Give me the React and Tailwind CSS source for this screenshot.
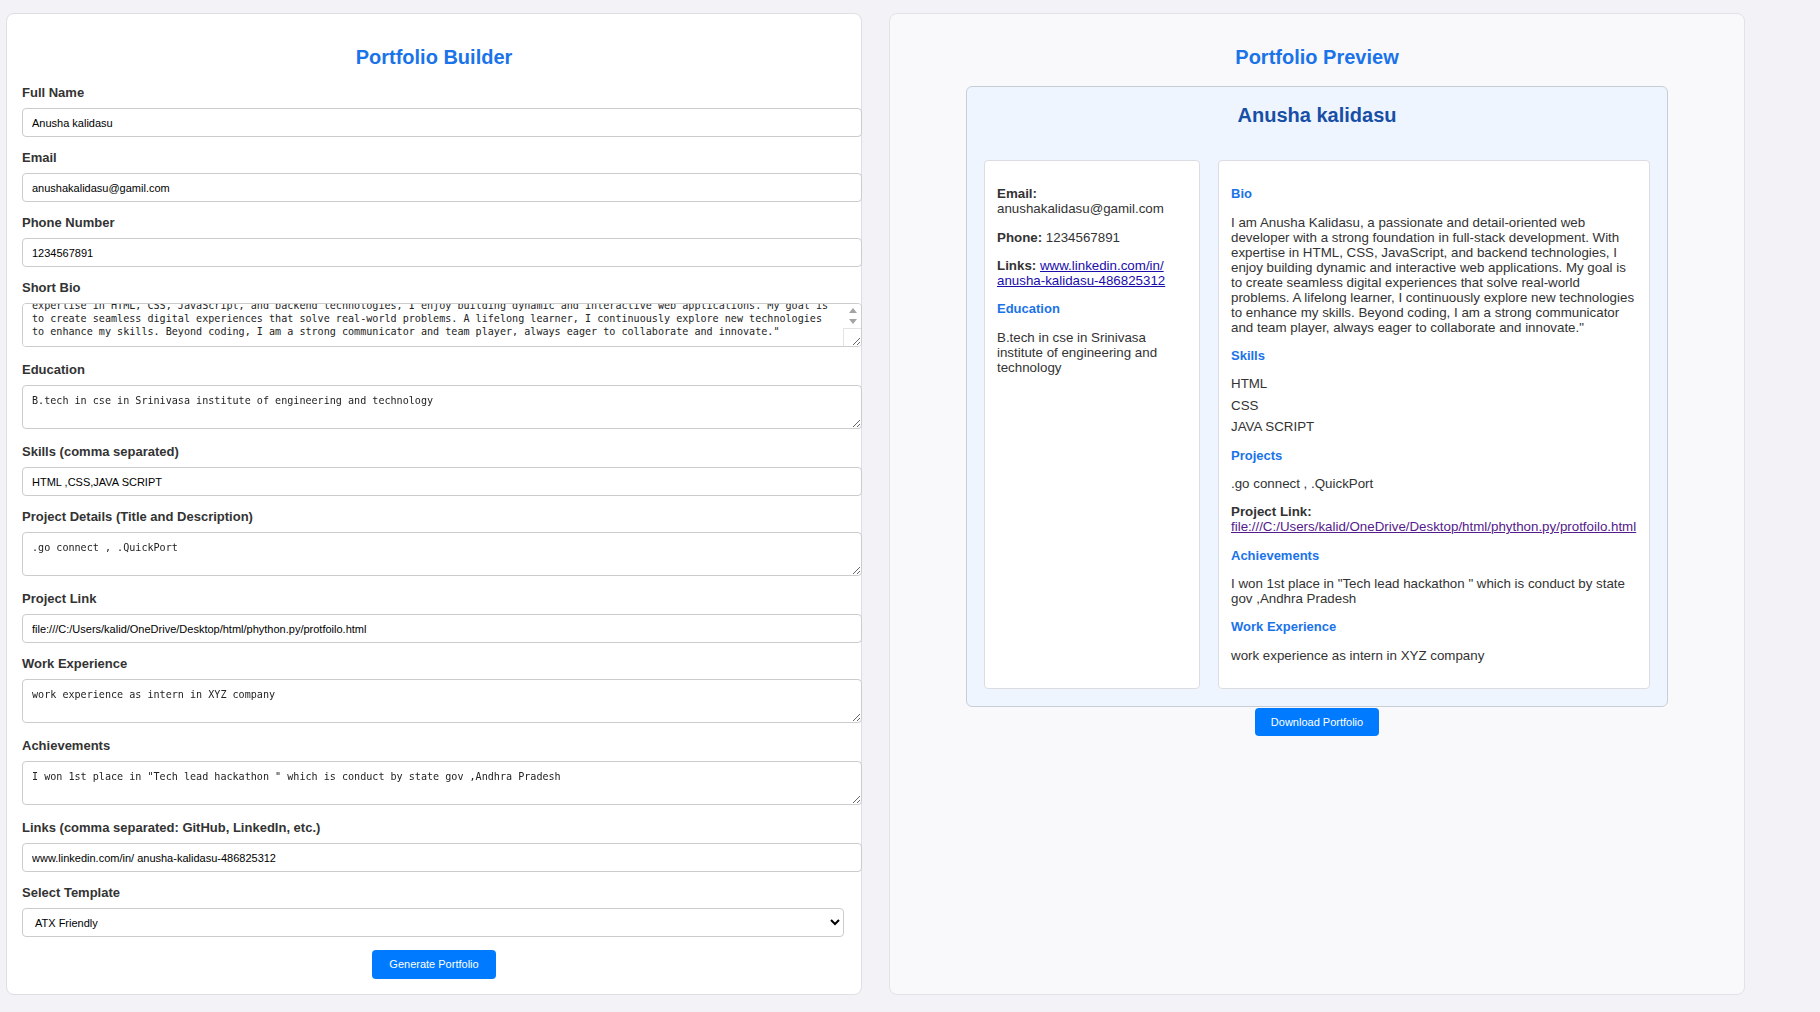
import { useEffect, useRef } from 'react';

const bioLines = [
  'I am Anusha Kalidasu, a passionate and detail-oriented web developer with a strong foundation in full-stack development. With',
  'expertise in HTML, CSS, JavaScript, and backend technologies, I enjoy building dynamic and interactive web applications. My goal is',
  'to create seamless digital experiences that solve real-world problems. A lifelong learner, I continuously explore new technologies',
  'to enhance my skills. Beyond coding, I am a strong communicator and team player, always eager to collaborate and innovate."',
];

const bioText = bioLines.join(' ');

const labelCls = 'block text-[13px] leading-[15px] font-bold text-[#333] mb-[8px]';
const inputCls =
  'block w-[calc(100%+16px)] h-[29px] px-[9px] border border-[#ccc] rounded-[4px] bg-white text-[11px] text-black outline-none mb-[13px]';
const areaCls =
  'block w-full h-[44px] px-[9px] py-[8px] border border-[#ccc] rounded-[4px] bg-white text-[10.1px] leading-[13px] text-[#222] outline-none [scrollbar-width:none] [font-family:"DejaVu_Sans_Mono",monospace]';

function Input({ label, value }) {
  return (
    <>
      <label className={labelCls}>{label}</label>
      <input className={inputCls} defaultValue={value} />
    </>
  );
}

function Area({ label, value, areaRef, scrollbar }) {
  return (
    <>
      <label className={labelCls}>{label}</label>
      <div className="relative w-[calc(100%+16px)] mb-[15px]">
        <textarea ref={areaRef} rows={2} spellCheck={false} className={areaCls} defaultValue={value} />
        {scrollbar && (
          <>
            {/* scrollbar arrows drawn over the box */}
            <div className="absolute right-[1px] top-[1px] w-[17px] h-[24px] flex flex-col items-center pt-[4px] gap-[6px] pointer-events-none">
              <span className="w-0 h-0 border-x-[4px] border-x-transparent border-b-[5px] border-b-[#a3a3a3]" />
              <span className="w-0 h-0 border-x-[4px] border-x-transparent border-t-[5px] border-t-[#a3a3a3]" />
            </div>
            <div className="absolute right-[1px] bottom-[1px] w-[18px] h-[18px] border-l border-t border-[#e3e3e3] pointer-events-none" />
          </>
        )}
      </div>
    </>
  );
}

function Heading({ children }) {
  return <h3 className="my-[13.33px] text-[13px] leading-[15px] font-bold text-[#1a73e8]">{children}</h3>;
}

function Para({ children }) {
  return <p className="my-[13.33px]">{children}</p>;
}

export default function App() {
  const bioRef = useRef(null);

  useEffect(() => {
    // keep the bio box scrolled to its last line
    if (bioRef.current) bioRef.current.scrollTop = bioRef.current.scrollHeight;
  }, []);

  return (
    <div className="min-h-screen bg-[#f3f3f7] pl-[6px] pt-[13px] pb-[17px] flex gap-[27px] items-stretch [font-family:'Liberation_Sans',Arial,sans-serif]">
      {/* builder form */}
      <div className="w-[856px] bg-white border border-[#dedee3] rounded-[8px] px-[15px] pt-[16px] pb-[15px]">
        <h2 className="mt-[16px] mb-[16px] text-center text-[20px] leading-[23px] font-bold text-[#1a73e8]">
          Portfolio Builder
        </h2>

        <Input label="Full Name" value="Anusha kalidasu" />
        <Input label="Email" value="anushakalidasu@gamil.com" />
        <Input label="Phone Number" value="1234567891" />
        <Area label="Short Bio" value={bioLines.join('\n')} areaRef={bioRef} scrollbar />
        <Area label="Education" value="B.tech in cse in Srinivasa institute of engineering and technology" />
        <Input label="Skills (comma separated)" value="HTML ,CSS,JAVA SCRIPT" />
        <Area label="Project Details (Title and Description)" value=".go connect , .QuickPort" />
        <Input label="Project Link" value="file:///C:/Users/kalid/OneDrive/Desktop/html/phython.py/protfoilo.html" />
        <Area label="Work Experience" value="work experience as intern in XYZ company" />
        <Area
          label="Achievements"
          value={'I won 1st place in "Tech lead hackathon " which is conduct by state gov ,Andhra Pradesh'}
        />
        <Input label="Links (comma separated: GitHub, LinkedIn, etc.)" value="www.linkedin.com/in/ anusha-kalidasu-486825312" />

        <label className={labelCls}>Select Template</label>
        <select
          defaultValue="atx"
          className="block w-[822px] h-[29px] pl-[8px] pr-[6px] border border-[#ccc] rounded-[4px] bg-white text-[11px] text-black outline-none mb-[13px]"
        >
          <option value="atx">ATX Friendly</option>
          <option value="modern">Modern</option>
          <option value="classic">Classic</option>
        </select>

        <button className="block mx-auto h-[29px] px-[17px] bg-[#007bff] text-white text-[11px] rounded-[4px]">
          Generate Portfolio
        </button>
      </div>

      {/* preview */}
      <div className="w-[856px] bg-[#f9f9fb] border border-[#e2e2e7] rounded-[8px] px-[16px] pt-[16px] pb-[15px]">
        <h2 className="mt-[16px] mb-[17px] text-center text-[20px] leading-[23px] font-bold text-[#1a73e8]">
          Portfolio Preview
        </h2>

        <div className="w-[702px] mx-auto bg-[#eef5fe] border border-[#c9ced6] rounded-[6px] p-[17px] text-[13.33px] leading-[15px] text-[#333]">
          <h2 className="mb-[33px] text-center text-[20px] leading-[23px] font-bold text-[#174ea6]">Anusha kalidasu</h2>

          <div className="grid grid-cols-[1fr_2fr] gap-[18px]">
            <div className="min-w-0 bg-white border border-[#dcdde2] rounded-[4px] p-[12px] flow-root">
              <Para>
                <strong>Email:</strong> anushakalidasu@gamil.com
              </Para>
              <Para>
                <strong>Phone:</strong> 1234567891
              </Para>
              <Para>
                <strong>Links:</strong>{' '}
                <a href="#" className="text-[#1a0dab] underline">
                  www.linkedin.com/in/ anusha-kalidasu-486825312
                </a>
              </Para>
              <Heading>Education</Heading>
              <Para>B.tech in cse in Srinivasa institute of engineering and technology</Para>
            </div>

            <div className="min-w-0 bg-white border border-[#dcdde2] rounded-[4px] p-[12px] flow-root">
              <Heading>Bio</Heading>
              <Para>{bioText}</Para>
              <Heading>Skills</Heading>
              <ul className="my-[13.33px]">
                <li className="mb-[6.5px]">HTML</li>
                <li className="mb-[6.5px]">CSS</li>
                <li className="mb-[6.5px]">JAVA SCRIPT</li>
              </ul>
              <Heading>Projects</Heading>
              <Para>.go connect , .QuickPort</Para>
              <Para>
                <strong>Project Link:</strong>{' '}
                <a href="#" className="text-[#551a8b] underline whitespace-nowrap">
                  file:///C:/Users/kalid/OneDrive/Desktop/html/phython.py/protfoilo.html
                </a>
              </Para>
              <Heading>Achievements</Heading>
              <Para>I won 1st place in "Tech lead hackathon " which is conduct by state gov ,Andhra Pradesh</Para>
              <Heading>Work Experience</Heading>
              <Para>work experience as intern in XYZ company</Para>
            </div>
          </div>
        </div>

        <button className="block mx-auto mt-[1px] h-[28px] px-[16px] bg-[#007bff] text-white text-[11px] rounded-[4px]">
          Download Portfolio
        </button>
      </div>
    </div>
  );
}
